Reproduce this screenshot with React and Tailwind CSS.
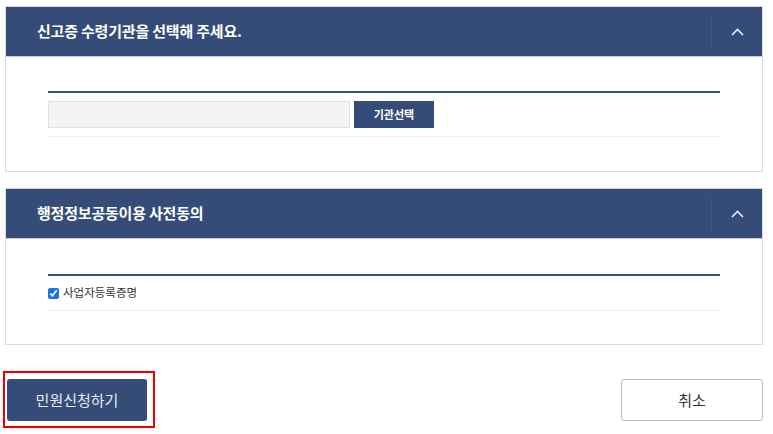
import { useState } from 'react';

const font = { fontFamily: '"Noto Sans CJK KR", "Noto Sans", sans-serif' };

function PanelHeader({ title }) {
  return (
    <div className="flex h-[50px] items-center bg-[#344c77] border-b border-[#c9ced8]">
      <h2 className="flex-1 pl-[31px] text-[15px] font-bold tracking-[-0.2px] text-white">{title}</h2>
      <div className="h-[34px] w-px bg-[#40577f]" />
      <button className="flex h-full w-[50px] items-center justify-center text-white">
        <svg width="13" height="8" viewBox="0 0 13 8" fill="none">
          <path d="M1 7 L6.5 1.5 L12 7" stroke="#e8ecf4" strokeWidth="1.6" />
        </svg>
      </button>
    </div>
  );
}

export default function App() {
  const [checked, setChecked] = useState(true);

  return (
    <div className="w-[773px] h-[434px] bg-white pt-[6px] pl-[5px] pr-[10px]" style={font}>
      {/* 신고증 수령기관 */}
      <section className="border border-[#dcdcdc] border-t-[#d0d4da]">
        <PanelHeader title="신고증 수령기관을 선택해 주세요." />
        <div className="px-[42px] pt-[34px] pb-[34px]">
          <div className="h-[2px] bg-[#3b5078]" />
          <div className="flex items-center gap-1 py-2 border-b border-[#f0f0f0]">
            <input className="h-[27px] w-[302px] bg-[#f4f4f4] border border-[#e1e1e1] outline-none" />
            <button className="h-[27px] w-[80px] bg-[#344c77] text-[11px] font-bold text-white">기관선택</button>
          </div>
        </div>
      </section>

      {/* 행정정보공동이용 */}
      <section className="mt-[16px] border border-[#dcdcdc] border-t-[#d0d4da]">
        <PanelHeader title="행정정보공동이용 사전동의" />
        <div className="px-[42px] pt-[35px] pb-[33px]">
          <div className="h-[2px] bg-[#3b5078]" />
          <label className="flex h-[35px] items-center gap-[4px] border-b border-[#ececec] text-[11.5px] text-[#333]">
            <input
              type="checkbox"
              checked={checked}
              onChange={() => setChecked(!checked)}
              className="h-[11px] w-[11px] accent-[#1a73e8]"
            />
            사업자등록증명
          </label>
        </div>
      </section>

      {/* 하단 버튼 */}
      <div className="mt-[26px] flex items-start justify-between">
        <div className="-ml-[2px] border-2 border-[#ee0000] pt-[6px] pl-[2px] pr-[6px] pb-[5px]">
          <button className="block h-[42px] w-[140px] rounded-[3px] bg-[#344c77] text-[15px] text-[#e8ebf0]">민원신청하기</button>
        </div>
        <button className="mt-[8px] h-[42px] w-[142px] rounded-[3px] border border-[#bdbdbd] bg-white text-[15px] text-[#333]">취소</button>
      </div>
    </div>
  );
}
